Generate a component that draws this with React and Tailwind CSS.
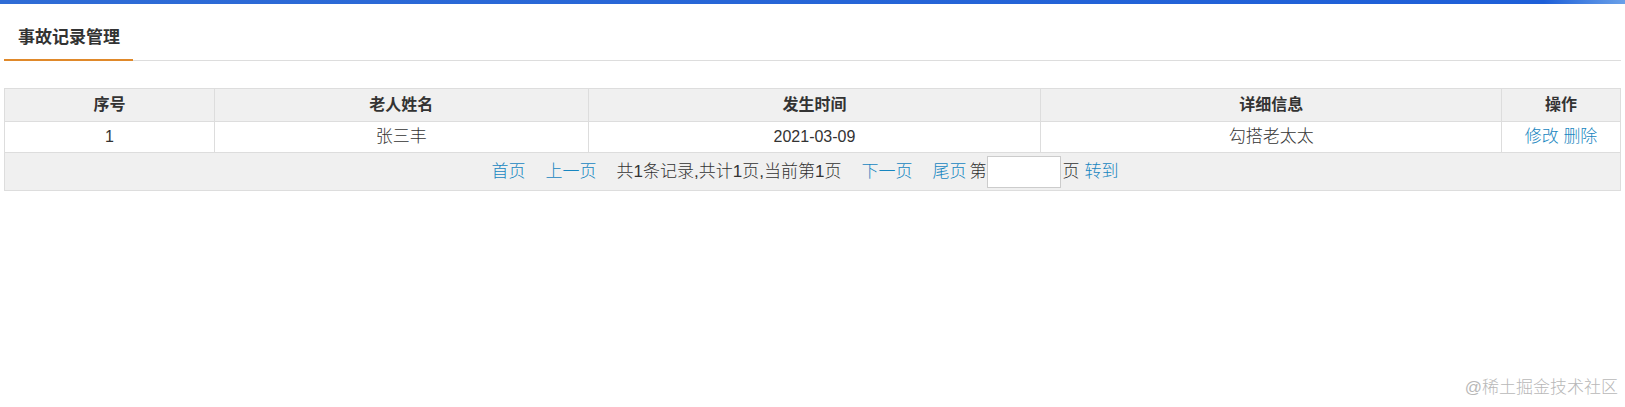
import React from 'react';

const rows = [
  { id: 1, name: '张三丰', time: '2021-03-09', detail: '勾搭老太太' },
];

const font = "font-['Liberation_Sans','Noto_Sans_CJK_SC',sans-serif]";

export default function App() {
  return (
    <div className={`relative w-[1625px] h-[407px] bg-white text-[#333] ${font}`}>
      {/* top blue bar */}
      <div className="h-[4px] bg-linear-to-r from-[#2f6cd6] via-[#1e5fd8] via-95% to-[#6aa0e8]" />

      {/* title tab */}
      <div className="px-[4px]">
        <div className="flex border-b border-[#dddddd]">
          <div className="pl-[14px] pr-[13px] pt-[22px] pb-[9px] -mb-px border-b-2 border-[#e0892a] text-[17px] leading-[24px] font-bold text-[#333]">
            事故记录管理
          </div>
        </div>

        {/* table */}
        <table className="mt-[27px] w-[1617px] border-collapse border border-[#dddddd] text-[17px] font-light">
          <thead>
            <tr className="bg-[#f0f0f0] h-[33px] text-[16px]">
              <th className="w-[210px] border border-[#dddddd] font-bold">序号</th>
              <th className="w-[374px] border border-[#dddddd] font-bold">老人姓名</th>
              <th className="w-[453px] border border-[#dddddd] font-bold">发生时间</th>
              <th className="w-[461px] border border-[#dddddd] font-bold">详细信息</th>
              <th className="w-[119px] border border-[#dddddd] font-bold">操作</th>
            </tr>
          </thead>
          <tbody>
            {rows.map((r) => (
              <tr key={r.id} className="h-[31px] text-center">
                <td className="border border-[#dddddd] text-[16px]">{r.id}</td>
                <td className="border border-[#dddddd]">{r.name}</td>
                <td className="border border-[#dddddd] text-[16px]">{r.time}</td>
                <td className="border border-[#dddddd]">{r.detail}</td>
                <td className="border border-[#dddddd] text-[#1786c0]">
                  <a href="#">修改</a> <a href="#">删除</a>
                </td>
              </tr>
            ))}
            <tr className="h-[38px] bg-[#f0f0f0]">
              <td colSpan={5} className="border border-[#dddddd]">
                <div className="flex items-center justify-center pr-[25px]">
                  <a href="#" className="px-[10px] text-[#1786c0]">首页</a>
                  <a href="#" className="px-[10px] text-[#1786c0]">上一页</a>
                  <span className="px-[10px]">共1条记录,共计1页,当前第1页</span>
                  <a href="#" className="px-[10px] text-[#1786c0]">下一页</a>
                  <a href="#" className="pl-[10px] pr-[3px] text-[#1786c0]">尾页</a>
                  <span>第</span>
                  <input className="mx-[1px] w-[74px] h-[32px] bg-white border border-[#cccccc] outline-none" />
                  <span>页</span>
                  <a href="#" className="pl-[5px] text-[#1786c0]">转到</a>
                </div>
              </td>
            </tr>
          </tbody>
        </table>
      </div>

      {/* watermark */}
      <div className="absolute right-[7px] bottom-[9px] text-[17px] leading-[20px] font-light text-[#b8b8b8]">
        @稀土掘金技术社区
      </div>
    </div>
  );
}
